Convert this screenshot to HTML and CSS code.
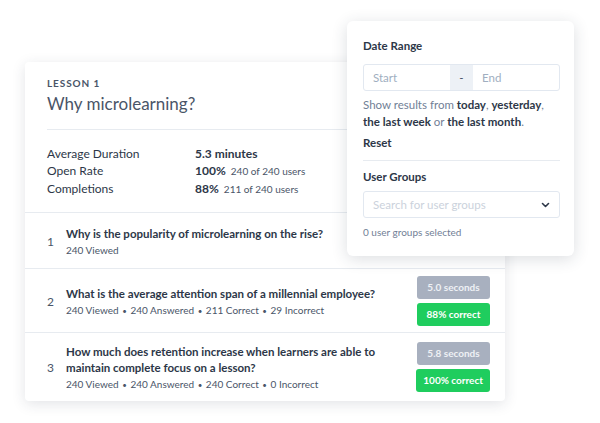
FILE: index.html
```html
<!DOCTYPE html>
<html lang="en">
<head>
    <meta charset="UTF-8">
    <title>Lesson report</title>
    <link rel="stylesheet" href="styles.css">
</head>
<body>
<div class="stage">
    <div class="lesson-card">
        <div class="lesson-head">
            <div class="eyebrow">Lesson 1</div>
            <h1 class="lesson-title">Why microlearning?</h1>
        </div>
        <div class="stats">
            <div class="stat-label">Average Duration</div>
            <div class="stat-value"><b>5.3 minutes</b></div>
            <div class="stat-label">Open Rate</div>
            <div class="stat-value"><b>100%</b> <small>240 of 240 users</small></div>
            <div class="stat-label">Completions</div>
            <div class="stat-value"><b>88%</b> <small>211 of 240 users</small></div>
        </div>
        <ol class="questions">
            <li class="question">
                <span class="q-num">1</span>
                <div class="q-body">
                    <div class="q-title">Why is the popularity of microlearning on the rise?</div>
                    <div class="q-meta">240 Viewed</div>
                </div>
            </li>
            <li class="question">
                <span class="q-num">2</span>
                <div class="q-body">
                    <div class="q-title">What is the average attention span of a millennial employee?</div>
                    <div class="q-meta">240 Viewed <i>•</i> 240 Answered <i>•</i> 211 Correct <i>•</i> 29 Incorrect</div>
                </div>
                <div class="badges">
                    <span class="badge grey">5.0 seconds</span>
                    <span class="badge green">88% correct</span>
                </div>
            </li>
            <li class="question tall">
                <span class="q-num">3</span>
                <div class="q-body">
                    <div class="q-title">How much does retention increase when learners are able to maintain complete focus on a lesson?</div>
                    <div class="q-meta">240 Viewed <i>•</i> 240 Answered <i>•</i> 240 Correct <i>•</i> 0 Incorrect</div>
                </div>
                <div class="badges">
                    <span class="badge grey">5.8 seconds</span>
                    <span class="badge green">100% correct</span>
                </div>
            </li>
        </ol>
    </div>

    <div class="filter-panel">
        <h5 class="panel-label">Date Range</h5>
        <div class="date-range">
            <span class="field">Start</span>
            <span class="dash">-</span>
            <span class="field">End</span>
        </div>
        <p class="hint">Show results from <b>today</b>, <b>yesterday</b>, <b>the last week</b> or <b>the last month</b>.</p>
        <div class="reset">Reset</div>
        <hr class="panel-rule">
        <h5 class="panel-label groups">User Groups</h5>
        <div class="select">
            <span>Search for user groups</span>
            <svg width="9" height="6" viewBox="0 0 9 6"><path d="M1.5 1.5 L4.5 4.5 L7.5 1.5" fill="none" stroke="#2d3748" stroke-width="1.6" stroke-linecap="round" stroke-linejoin="round"/></svg>
        </div>
        <div class="selected-count">0 user groups selected</div>
    </div>
</div>
</body>
</html>
```

FILE: styles.css
```css
* {
    box-sizing: border-box;
}

body {
    margin: 0;
    background: #fff;
    font-family: Lato, "Open Sans", sans-serif;
    color: #2d3748;
}

.stage {
    position: relative;
    width: 600px;
    height: 423px;
    padding: 62px 0 0 25px;
}

.lesson-card {
    width: 480px;
    background: #fff;
    border-radius: 4px;
    box-shadow: 0 3px 14px rgba(40, 50, 70, 0.13);
}

.lesson-head {
    margin: 0 0 0 22px;
    padding: 15px 0 15px;
    border-bottom: 1px solid #e7ebf0;
}

.eyebrow {
    font-size: 10px;
    font-weight: 700;
    letter-spacing: 0.9px;
    text-transform: uppercase;
    color: #4a5568;
}

.lesson-title {
    margin: 4px 0 0;
    font-size: 17px;
    font-weight: 400;
    color: #4a5568;
}

.stats {
    display: grid;
    grid-template-columns: 148px 1fr;
    padding: 15px 22px 14px;
    font-size: 12px;
    line-height: 17px;
    color: #2d3748;
}

.stat-value b {
    font-weight: 700;
}

.stat-value small {
    font-size: 10px;
    color: #4a5568;
    margin-left: 2px;
}

.questions {
    list-style: none;
    margin: 0;
    padding: 0;
}

.question {
    display: flex;
    align-items: center;
    gap: 12px;
    padding: 7px 15px 6px 22px;
    border-top: 1px solid #e7ebf0;
    min-height: 56px;
}

.question.tall {
    padding-top: 9px;
    padding-bottom: 9px;
}

.q-num {
    width: 7px;
    font-size: 12px;
    color: #4a5568;
}

.q-body {
    flex: 1;
}

.q-title {
    font-size: 11.5px;
    font-weight: 700;
    line-height: 16px;
    color: #2d3748;
}

.q-meta {
    margin-top: 2px;
    font-size: 10px;
    color: #4a5568;
}

.q-meta i {
    font-style: normal;
    font-size: 8px;
    margin: 0 1px;
}

.badges {
    display: flex;
    flex-direction: column;
    align-items: flex-end;
    gap: 4px;
}

.badge {
    display: block;
    min-width: 73px;
    padding: 5px 7px;
    border-radius: 3px;
    font-size: 10px;
    font-weight: 700;
    line-height: 13px;
    text-align: center;
    color: #fff;
}

.badge.grey {
    background: #a8b0bf;
    color: #eef1f5;
}

.badge.green {
    background: #1fcd5e;
}

.filter-panel {
    position: absolute;
    left: 347px;
    top: 21px;
    width: 227px;
    padding: 18px 14px 18px 16px;
    background: #fff;
    border-radius: 6px;
    box-shadow: 0 3px 16px rgba(40, 50, 70, 0.16);
}

.panel-label {
    margin: 0 0 12px;
    font-size: 11.5px;
    font-weight: 700;
    color: #2d3748;
}

.panel-label.groups {
    margin-bottom: 8px;
}

.date-range {
    display: flex;
    height: 27px;
    border: 1px solid #e2e8f0;
    border-radius: 3px;
    font-size: 11.5px;
    color: #a0aec0;
}

.field {
    flex: 1;
    display: flex;
    align-items: center;
    padding-left: 9px;
}

.dash {
    width: 23px;
    display: flex;
    align-items: center;
    justify-content: center;
    background: #edf1f6;
    color: #4a5568;
}

.hint {
    margin: 5px 0 6px;
    font-size: 11.5px;
    line-height: 17px;
    color: #718096;
}

.hint b {
    font-weight: 700;
    color: #2d3748;
}

.reset {
    font-size: 11.5px;
    font-weight: 700;
    color: #2d3748;
    padding-bottom: 11px;
}

.panel-rule {
    border: 0;
    border-top: 1px solid #e7ebf0;
    margin: 0 0 9px;
}

.select {
    display: flex;
    align-items: center;
    justify-content: space-between;
    height: 27px;
    padding: 0 9px;
    border: 1px solid #e2e8f0;
    border-radius: 3px;
    font-size: 11.5px;
    color: #cbd2dc;
}

.selected-count {
    margin-top: 8px;
    font-size: 10px;
    color: #718096;
}
```
